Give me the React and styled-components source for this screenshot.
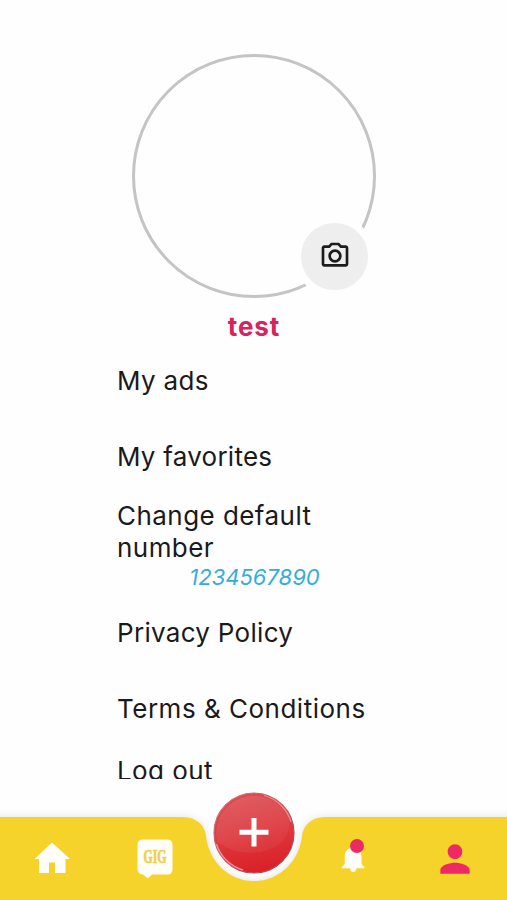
import { MdOutlinePhotoCamera, MdPerson } from 'react-icons/md';
import styled, { createGlobalStyle } from 'styled-components';

const GlobalStyle = createGlobalStyle`
  * {
    box-sizing: border-box;
  }

  body {
    margin: 0;
    background-color: #fefefe;
    font-family: Inter, 'Liberation Sans', sans-serif;
  }
`;

const Screen = styled.div`
  display: flex;
  flex-direction: column;
  height: 900px;
  max-width: 507px;
  overflow: hidden;
`;

const Content = styled.main`
  flex: none;
  height: 779px;
  padding-top: 54px;
  overflow: hidden;
`;

const Avatar = styled.div`
  position: relative;
  width: 244px;
  height: 244px;
  margin: 0 auto;
  border: 3px solid #c4c4c4;
  border-radius: 50%;
`;

const CameraButton = styled.button`
  position: absolute;
  right: -2px;
  bottom: -2px;
  display: flex;
  align-items: center;
  justify-content: center;
  width: 81px;
  height: 81px;
  padding: 0 0 1px 1px;
  border: 7px solid #fefefe;
  border-radius: 50%;
  background-color: #eeeeee;
  color: #1c1c1c;
`;

const UserName = styled.h1`
  height: 32px;
  margin: 13px 0 0;
  font-size: 26px;
  font-weight: 700;
  line-height: 32px;
  letter-spacing: 0.9px;
  text-align: center;
  text-indent: 1px;
  color: #d9235f;
`;

const Menu = styled.div`
  display: flex;
  flex-direction: column;
  width: 273px;
  margin: 0 auto;
`;

const MenuItem = styled.div`
  display: flex;
  flex-direction: column;
  justify-content: center;
  flex: none;
  height: ${({ $height }) => $height || 75.5}px;
`;

const MenuLabel = styled.span`
  font-size: 26px;
  line-height: 32px;
  letter-spacing: ${({ $spacing }) => $spacing || 0.35}px;
  color: #1a1a1a;
`;

const PhoneNumber = styled.span`
  padding-left: 2px;
  font-size: 22px;
  font-style: italic;
  font-weight: 450;
  line-height: 26px;
  text-align: center;
  color: #35addb;
`;

const BottomBar = styled.nav`
  position: relative;
  display: grid;
  grid-template-columns: 104px 101px 97px 101px 104px;
  align-items: start;
  height: 121px;
`;

const BarShape = styled.svg`
  position: absolute;
  inset: 0;
  z-index: -1;
`;

const Tab = styled.div`
  position: relative;
  display: flex;
  justify-content: center;
  padding-top: ${({ $top }) => $top}px;
  color: ${({ $active }) => ($active ? '#ee2a66' : '#fffef8')};
`;

const Dot = styled.span`
  position: absolute;
  top: 60px;
  left: 48px;
  width: 14px;
  height: 14px;
  border-radius: 50%;
  background-color: #ec2b62;
`;

const AddButton = styled.button`
  display: flex;
  justify-content: center;
  margin: 13px 0 0;
  padding: 0;
  border: 0;
  background: none;
`;

function HomeIcon() {
  return (
    <svg width="36" height="32" viewBox="0 0 36 32" fill="currentColor">
      <path d="M18 0.5L36 17H31.5V31H21V20.5H15V31H5V17H0.5Z" />
    </svg>
  );
}

function BellIcon() {
  return (
    <svg width="24" height="26" viewBox="0 0 24 26" fill="currentColor">
      <path d="M12 0C6.5 1 3.8 4.5 3.8 9.5V16.5Q3.6 18.4 0.8 19.8V21.2H23.4V19.8Q20.8 18.4 20.5 16.5V9.5C20.5 4.5 17.5 1 12 0Z" />
      <path d="M9 21H15.5Q15 25 12.2 25T9 21Z" />
    </svg>
  );
}

function GigIcon() {
  return (
    <svg width="36" height="41" viewBox="0 0 36 41" overflow="visible">
      <path
        d="M6 0.5H30Q35.5 0.5 35.5 6V30Q35.5 35.5 30 35.5H15L11 39.5L6 35.5Q0.5 35 0.5 30V6Q0.5 0.5 6 0.5Z"
        fill="#fffef8"
      />
      <text
        x="6.5"
        y="24"
        textLength="23"
        lengthAdjust="spacingAndGlyphs"
        fontFamily="Liberation Serif, serif"
        fontSize="19"
        fontWeight="700"
        fill="#edcf4d"
        stroke="#edcf4d"
        strokeWidth="0.7"
      >
        GIG
      </text>
    </svg>
  );
}

function AddIcon() {
  return (
    <svg width="82" height="82" viewBox="0 0 82 82">
      <defs>
        <linearGradient id="ball" x1="0.3" y1="0" x2="0.5" y2="1">
          <stop offset="0" stopColor="#dc4d52" />
          <stop offset="0.5" stopColor="#dd3a3f" />
          <stop offset="1" stopColor="#da2026" />
        </linearGradient>
        <linearGradient id="gloss" x1="0" y1="0" x2="0.8" y2="1">
          <stop offset="0" stopColor="#fff" stopOpacity="0.1" />
          <stop offset="1" stopColor="#fff" stopOpacity="0.04" />
        </linearGradient>
        <linearGradient id="rim" x1="0" y1="0" x2="1" y2="1">
          <stop offset="0" stopColor="#d8757a" />
          <stop offset="0.5" stopColor="#c5535b" />
          <stop offset="1" stopColor="#a63f4a" />
        </linearGradient>
      </defs>
      <circle cx="41" cy="41" r="40" fill="url(#ball)" stroke="url(#rim)" strokeWidth="1.2" />
      <path d="M3 41A38 38 0 0 1 76 27Q78 51 54 58Q28 66 4 50Z" fill="url(#gloss)" />
      <path d="M51 3.5A39 39 0 0 1 78 30" fill="none" stroke="#eb9093" strokeWidth="1.2" />
      <path d="M3.5 52A39 39 0 0 0 30 78" fill="none" stroke="#eb9093" strokeWidth="1.4" />
      <path d="M41 26V54.5M26.5 40.3H55.5" stroke="#fff" strokeWidth="5" />
    </svg>
  );
}

export default function App() {
  return (
    <>
      <GlobalStyle />
      <Screen>
        {/* Profile */}
        <Content>
          <Avatar>
            <CameraButton aria-label="Change photo">
              <MdOutlinePhotoCamera size={32} />
            </CameraButton>
          </Avatar>
          <UserName>test</UserName>

          <Menu>
            <MenuItem $height={76}>
              <MenuLabel>My ads</MenuLabel>
            </MenuItem>
            <MenuItem $height={76}>
              <MenuLabel $spacing={0.25}>My favorites</MenuLabel>
            </MenuItem>
            <MenuItem $height={100}>
              <MenuLabel $spacing={0.45}>Change default number</MenuLabel>
              <PhoneNumber>1234567890</PhoneNumber>
            </MenuItem>
            <MenuItem $height={76}>
              <MenuLabel $spacing={0.3}>Privacy Policy</MenuLabel>
            </MenuItem>
            <MenuItem $height={76}>
              <MenuLabel $spacing={0.5}>Terms &amp; Conditions</MenuLabel>
            </MenuItem>
            <MenuItem $height={48}>
              <MenuLabel $spacing={0.4}>Log out</MenuLabel>
            </MenuItem>
          </Menu>
        </Content>

        {/* Tab bar */}
        <BottomBar>
          <BarShape width="507" height="121" viewBox="0 0 507 121">
            <path
              d="M-10 38H183C197 38 205 47 206 57C209 83 229 102 254 102C279 102 299 83 302 57C303 47 311 38 325 38H517V131H-10Z"
              fill="#f6d32b"
              style={{ filter: 'drop-shadow(0 0 4px rgba(0, 0, 0, 0.11))' }}
            />
          </BarShape>
          <Tab $top={63}>
            <HomeIcon />
          </Tab>
          <Tab $top={60}>
            <GigIcon />
          </Tab>
          <AddButton aria-label="Add">
            <AddIcon />
          </AddButton>
          <Tab $top={68}>
            <BellIcon />
            <Dot />
          </Tab>
          <Tab $top={58} $active>
            <MdPerson size={44} />
          </Tab>
        </BottomBar>
      </Screen>
    </>
  );
}
